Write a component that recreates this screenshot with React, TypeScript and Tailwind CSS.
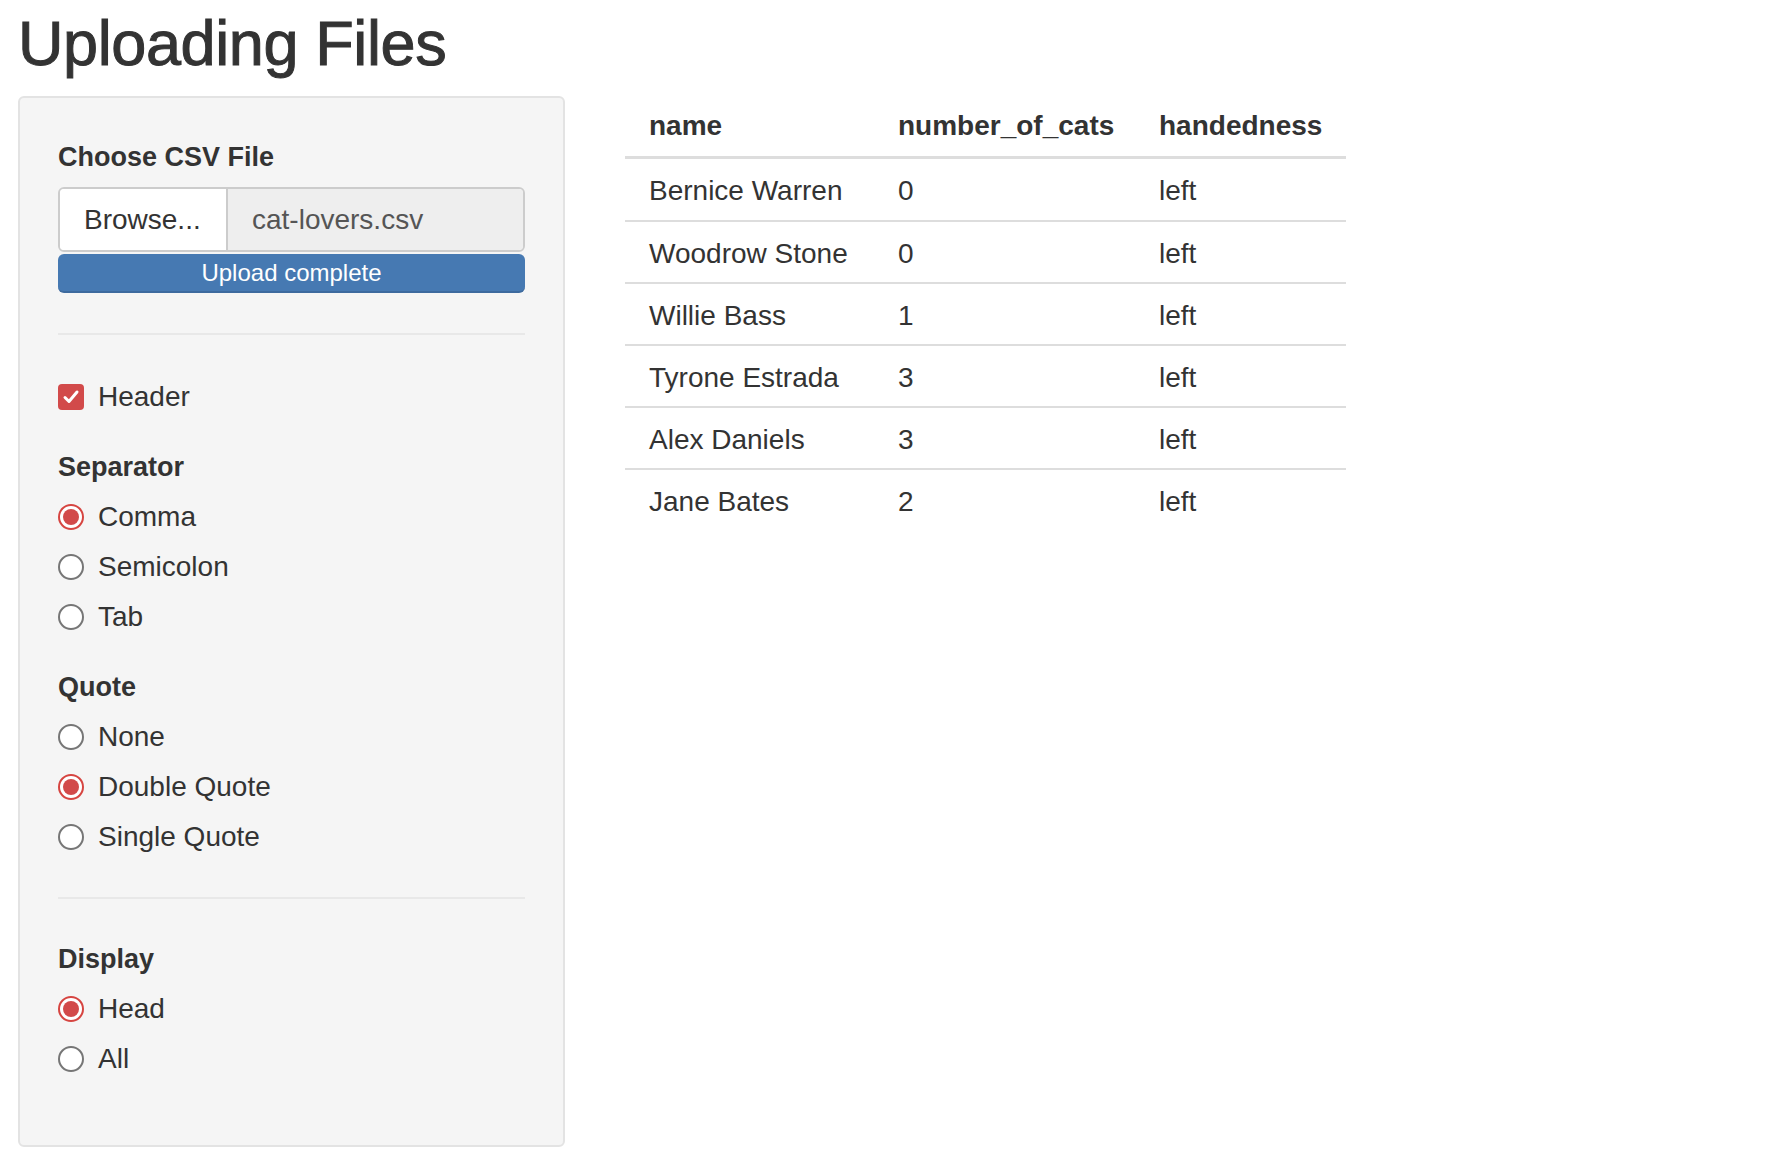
import React from "react";

const rows = [
  { name: "Bernice Warren", cats: "0", hand: "left" },
  { name: "Woodrow Stone", cats: "0", hand: "left" },
  { name: "Willie Bass", cats: "1", hand: "left" },
  { name: "Tyrone Estrada", cats: "3", hand: "left" },
  { name: "Alex Daniels", cats: "3", hand: "left" },
  { name: "Jane Bates", cats: "2", hand: "left" },
];

function Radio({ label, checked }: { label: string; checked?: boolean }) {
  return (
    <div className="flex h-[50px] items-center">
      {checked ? (
        <span className="flex h-[26px] w-[26px] items-center justify-center rounded-full border-2 border-[#d64541] bg-white">
          <span className="h-[16px] w-[16px] rounded-full bg-[#d24a4a]" />
        </span>
      ) : (
        <span className="h-[26px] w-[26px] rounded-full border-2 border-[#767676] bg-white" />
      )}
      <span className="ml-[14px] text-[28px]">{label}</span>
    </div>
  );
}

function GroupLabel({ children, className }: { children: React.ReactNode; className: string }) {
  return <div className={`text-[27px] font-bold leading-[32px] ${className}`}>{children}</div>;
}

export default function App() {
  return (
    <div
      className="min-h-screen bg-white px-[18px] pt-[10px] text-[#333]"
      style={{ fontFamily: '"Liberation Sans", Arial, sans-serif' }}
    >
      <h1 className="text-[63px] font-normal leading-[67px] tracking-[-0.4px] [-webkit-text-stroke:1px_#333]">
        Uploading Files
      </h1>

      <div className="mt-[19px] flex items-start gap-[60px]">
        {/* sidebar */}
        <div className="h-[1051px] w-[547px] shrink-0 rounded-[6px] border-2 border-[#e3e3e3] bg-[#f5f5f5] px-[38px] pt-[43px]">
          <GroupLabel className="">Choose CSV File</GroupLabel>

          <div className="mt-[14px] flex h-[65px] overflow-hidden rounded-[6px] border-2 border-[#ccc]">
            <div className="flex w-[168px] items-center border-r-2 border-[#ccc] bg-white pl-[24px] text-[28px]">
              Browse...
            </div>
            <div className="flex flex-1 items-center bg-[#eee] pl-[24px] text-[28px] text-[#555]">
              cat-lovers.csv
            </div>
          </div>
          <div className="mt-[2px] flex h-[39px] items-center justify-center rounded-[6px] border-b-2 border-[#3d6a9e] bg-[#4679b2] text-[24px] text-white">
            Upload complete
          </div>

          <div className="mt-[40px] h-[2px] bg-[#e8e8e8]" />

          <div className="mt-[42px] flex h-[40px] items-center">
            <span className="flex h-[26px] w-[26px] items-center justify-center rounded-[4px] bg-[#d24a4a]">
              <svg width="18" height="18" viewBox="0 0 18 18" fill="none">
                <path d="M3 9.5 L7 13.5 L15 4" stroke="white" strokeWidth="3" strokeLinecap="round" strokeLinejoin="round" />
              </svg>
            </span>
            <span className="ml-[14px] text-[28px]">Header</span>
          </div>

          <GroupLabel className="mt-[34px]">Separator</GroupLabel>
          <div className="mt-[9px]">
            <Radio label="Comma" checked />
            <Radio label="Semicolon" />
            <Radio label="Tab" />
          </div>

          <GroupLabel className="mt-[29px]">Quote</GroupLabel>
          <div className="mt-[9px]">
            <Radio label="None" />
            <Radio label="Double Quote" checked />
            <Radio label="Single Quote" />
          </div>

          <div className="mt-[35px] h-[2px] bg-[#e8e8e8]" />

          <GroupLabel className="mt-[44px]">Display</GroupLabel>
          <div className="mt-[9px]">
            <Radio label="Head" checked />
            <Radio label="All" />
          </div>
        </div>

        {/* table */}
        <table className="w-[721px] table-fixed border-collapse whitespace-nowrap text-left text-[28px]">
          <thead>
            <tr className="h-[61px] border-b-[3px] border-[#ddd]">
              <th className="w-[249px] px-[24px] font-bold">name</th>
              <th className="w-[261px] px-[24px] font-bold">number_of_cats</th>
              <th className="w-[211px] px-[24px] font-bold">handedness</th>
            </tr>
          </thead>
          <tbody>
            {rows.map((r, i) => (
              <tr key={r.name} className={i === 0 ? "h-[64px]" : "h-[62px] border-t-2 border-[#ddd]"}>
                <td className="px-[24px] pt-[3px]">{r.name}</td>
                <td className="px-[24px] pt-[3px]">{r.cats}</td>
                <td className="px-[24px] pt-[3px]">{r.hand}</td>
              </tr>
            ))}
          </tbody>
        </table>
      </div>
    </div>
  );
}
